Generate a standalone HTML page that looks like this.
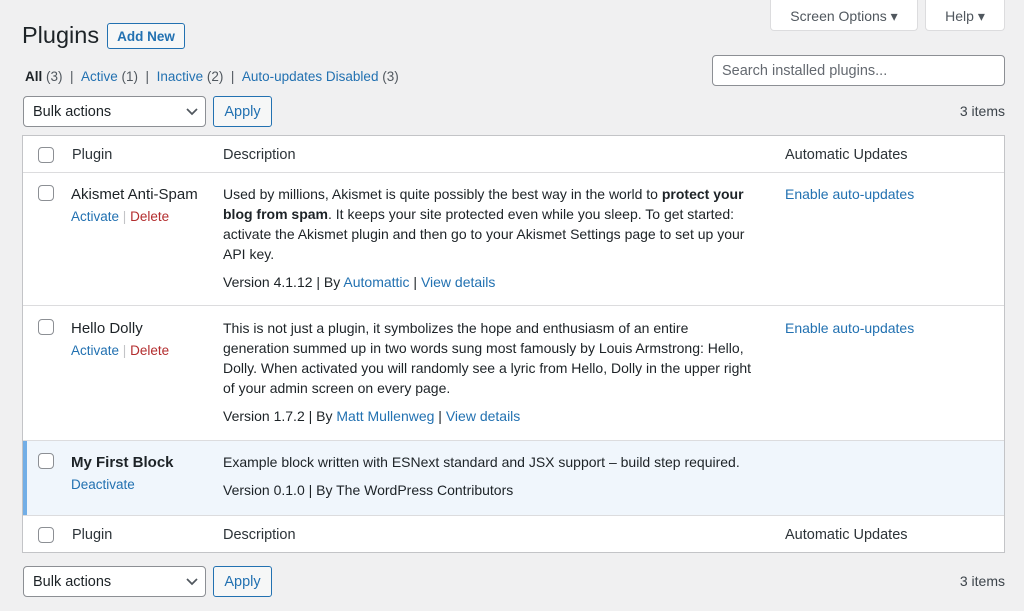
<!DOCTYPE html>
<html><head><meta charset="utf-8"><style>
*{box-sizing:border-box;margin:0;padding:0}
body{width:1024px;height:611px;background:#f0f0f1;font-family:"Liberation Sans",sans-serif;font-size:14px;color:#1d2327;position:relative;overflow:hidden}
.a{position:absolute}
a,.l{color:#2271b1;text-decoration:none}
.btn{position:absolute;border:1px solid #2271b1;border-radius:3px;color:#2271b1;background:#f6f7f7;text-align:center}
.sel{position:absolute;border:1px solid #8c8f94;border-radius:4px;background:#fff;padding-left:9px;line-height:30px;font-size:14.5px}
.sel svg{position:absolute;right:7px;top:11px}
.tab{position:absolute;background:#fff;border:1px solid #dcdcde;border-top:none;border-radius:0 0 4px 4px;color:#50575e;font-size:14px;line-height:32px;text-align:center}
.cb{position:absolute;width:16px;height:16px;border:1px solid #8c8f94;border-radius:4px;background:#fff}
.table{position:absolute;left:22px;top:135px;width:983px;height:418px;background:#fff;border:1px solid #c3c4c7}
.hl{position:absolute;left:0;width:981px;height:1px;background:#dcdcde}
.t{position:absolute;white-space:nowrap;font-size:14.5px}
.d{position:absolute;left:200px;width:535px;font-size:14px;line-height:20px}
</style></head><body>
<div class="tab" style="left:770px;top:0;width:148px;height:31px">Screen Options ▾</div>
<div class="tab" style="left:925px;top:0;width:80px;height:31px">Help ▾</div>
<div class="a" style="left:22px;top:22px;font-size:23.5px">Plugins</div>
<div class="btn" style="left:107px;top:23px;width:78px;height:26px;line-height:25px;font-size:13.5px;font-weight:bold">Add New</div>
<div class="a" style="left:25px;top:69px;font-size:13.5px;color:#50575e"><b style="color:#1d2327">All</b> (3) &nbsp;| &nbsp;<a>Active</a> (1) &nbsp;| &nbsp;<a>Inactive</a> (2) &nbsp;| &nbsp;<a>Auto-updates Disabled</a> (3)</div>
<div class="a" style="left:712px;top:55px;width:293px;height:31px;background:#fff;border:1px solid #8c8f94;border-radius:4px;padding-left:9px;line-height:30px;color:#646970;font-size:14.5px">Search installed plugins...</div>
<div class="sel" style="left:23px;top:96px;width:183px;height:31px">Bulk actions<svg width="12" height="8"><path d="M1 1l5 5 5-5" stroke="#50575e" stroke-width="1.7" fill="none"/></svg></div>
<div class="btn" style="left:213px;top:96px;width:59px;height:31px;line-height:30px;font-size:14.5px">Apply</div>
<div class="a" style="right:19px;top:103px;font-size:14px;color:#3c434a">3 items</div>

<div class="table">
 <div class="cb" style="left:15px;top:11px"></div>
 <div class="t" style="left:49px;top:11px;color:#2c3338">Plugin</div>
 <div class="t" style="left:200px;top:11px;color:#2c3338">Description</div>
 <div class="t" style="left:762px;top:11px;color:#2c3338">Automatic Updates</div>
 <div class="hl" style="top:36px"></div>

 <div class="cb" style="left:15px;top:49px"></div>
 <div class="t" style="left:48px;top:50px;font-size:15px">Akismet Anti-Spam</div>
 <div class="t" style="left:48px;top:73px;font-size:13.5px"><a>Activate</a> <span style="color:#c3c4c7">|</span> <span style="color:#b32d2e">Delete</span></div>
 <div class="d" style="top:48px">Used by millions, Akismet is quite possibly the best way in the world to <b>protect your blog from spam</b>. It keeps your site protected even while you sleep. To get started: activate the Akismet plugin and then go to your Akismet Settings page to set up your API key.</div>
 <div class="d" style="top:136px">Version 4.1.12 | By <a>Automattic</a> | <a>View details</a></div>
 <div class="t" style="left:762px;top:50px;font-size:14px"><a>Enable auto-updates</a></div>
 <div class="hl" style="top:169px"></div>

 <div class="cb" style="left:15px;top:183px"></div>
 <div class="t" style="left:48px;top:184px;font-size:15px">Hello Dolly</div>
 <div class="t" style="left:48px;top:207px;font-size:13.5px"><a>Activate</a> <span style="color:#c3c4c7">|</span> <span style="color:#b32d2e">Delete</span></div>
 <div class="d" style="top:182px">This is not just a plugin, it symbolizes the hope and enthusiasm of an entire generation summed up in two words sung most famously by Louis Armstrong: Hello, Dolly. When activated you will randomly see a lyric from Hello, Dolly in the upper right of your admin screen on every page.</div>
 <div class="d" style="top:270px">Version 1.7.2 | By <a>Matt Mullenweg</a> | <a>View details</a></div>
 <div class="t" style="left:762px;top:184px;font-size:14px"><a>Enable auto-updates</a></div>
 <div class="hl" style="top:304px"></div>

 <div class="a" style="left:0;top:305px;width:981px;height:74px;background:#f0f6fc;border-left:4px solid #72aee6"></div>
 <div class="cb" style="left:15px;top:317px"></div>
 <div class="t" style="left:48px;top:318px;font-size:15px;font-weight:bold">My First Block</div>
 <div class="t" style="left:48px;top:341px;font-size:13.5px"><a>Deactivate</a></div>
 <div class="d" style="top:316px">Example block written with ESNext standard and JSX support – build step required.</div>
 <div class="d" style="top:344px">Version 0.1.0 | By The WordPress Contributors</div>
 <div class="hl" style="top:379px"></div>

 <div class="cb" style="left:15px;top:391px"></div>
 <div class="t" style="left:49px;top:391px;color:#2c3338">Plugin</div>
 <div class="t" style="left:200px;top:391px;color:#2c3338">Description</div>
 <div class="t" style="left:762px;top:391px;color:#2c3338">Automatic Updates</div>
</div>

<div class="sel" style="left:23px;top:566px;width:183px;height:31px">Bulk actions<svg width="12" height="8"><path d="M1 1l5 5 5-5" stroke="#50575e" stroke-width="1.7" fill="none"/></svg></div>
<div class="btn" style="left:213px;top:566px;width:59px;height:31px;line-height:30px;font-size:14.5px">Apply</div>
<div class="a" style="right:19px;top:573px;font-size:14px;color:#3c434a">3 items</div>
</body></html>
